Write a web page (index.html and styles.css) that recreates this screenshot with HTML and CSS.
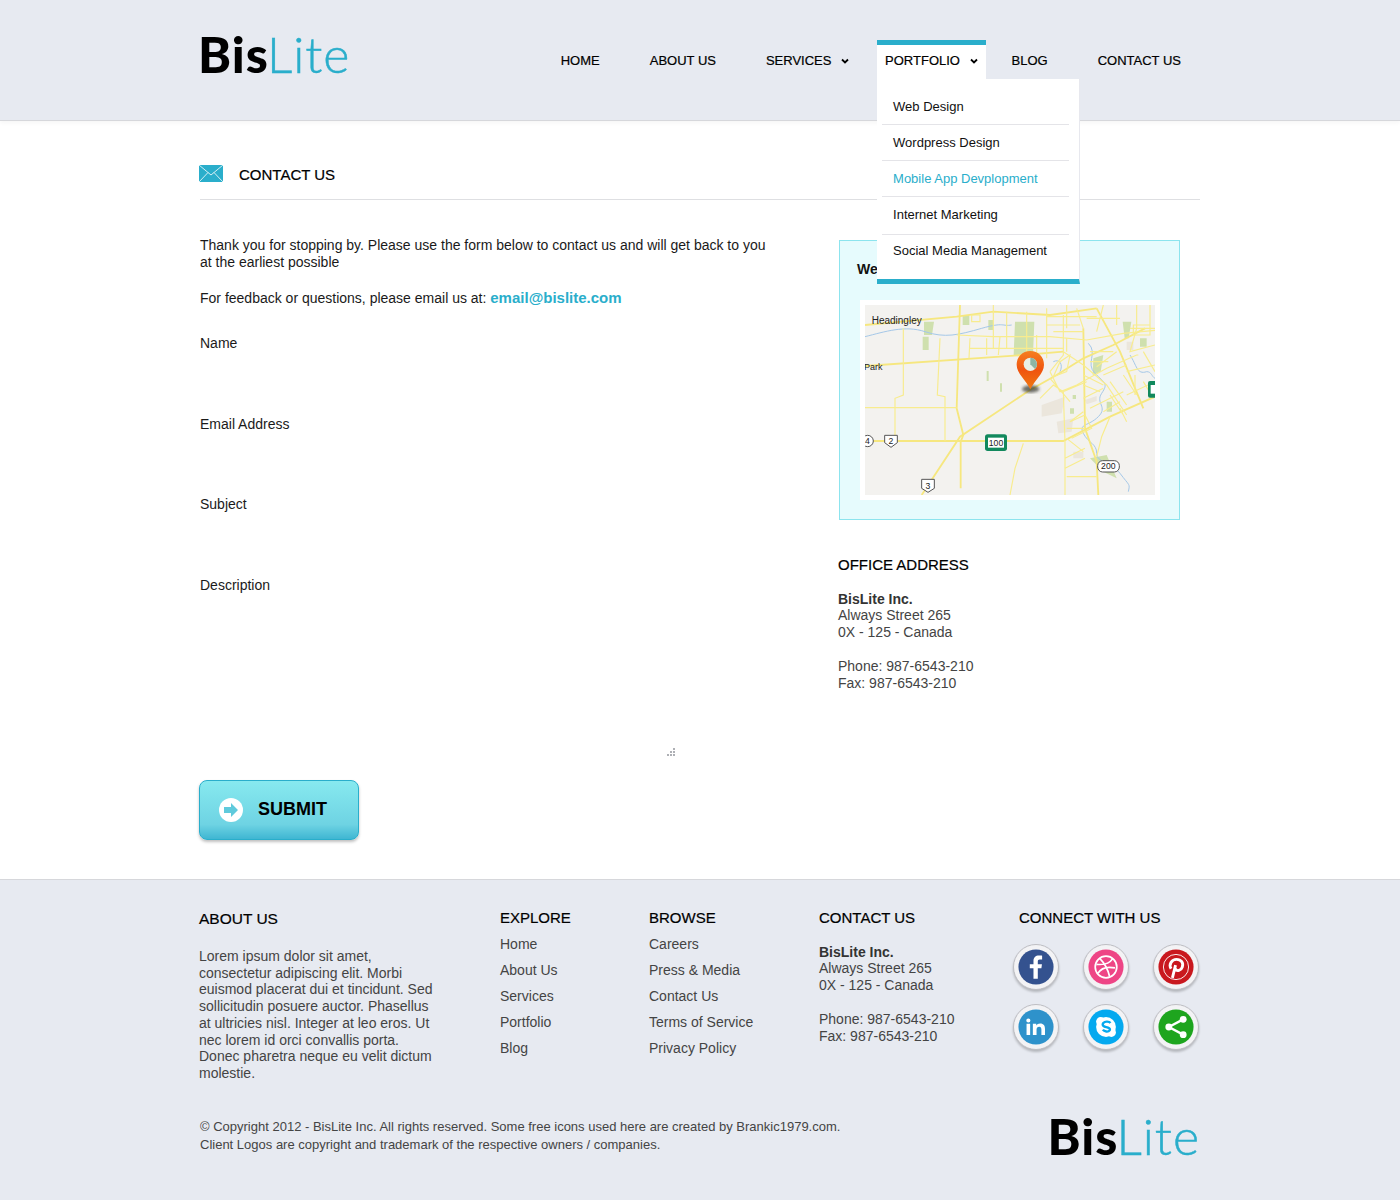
FILE: index.html
```html
<!DOCTYPE html>
<html>
<head>
	<meta charset="UTF-8">
	<title>BisLite - Contact Us</title>
	<link rel="stylesheet" href="styles.css">
</head>
<body>

<header class="top">
	<div class="wrap top-in">
		<a class="logo" href="#"><b>Bis</b><span>Lite</span></a>
		<ul class="nav">
			<li><a href="#">HOME</a></li>
			<li><a href="#">ABOUT US</a></li>
			<li class="has-sub"><a href="#">SERVICES <svg class="caret" viewBox="0 0 8 6"><path d="M1 1.5l3 3 3-3"/></svg></a></li>
			<li class="has-sub current">
				<a href="#">PORTFOLIO <svg class="caret" viewBox="0 0 8 6"><path d="M1 1.5l3 3 3-3"/></svg></a>
				<ul class="sub">
					<li><a href="#">Web Design</a></li>
					<li><a href="#">Wordpress Design</a></li>
					<li class="on"><a href="#">Mobile App Devplopment</a></li>
					<li class="tall"><a href="#">Internet Marketing</a></li>
					<li><a href="#">Social Media Management</a></li>
				</ul>
			</li>
			<li><a href="#">BLOG</a></li>
			<li><a href="#">CONTACT US</a></li>
		</ul>
	</div>
</header>

<main class="wrap main">
	<h1 class="page-title">
		<svg class="env" viewBox="0 0 24 17"><rect width="24" height="17" fill="#2aaecb"/><path d="M0 0l12 10L24 0M0 17l9-9.5M24 17l-9-9.5" fill="none" stroke="#fff" stroke-width=".8"/></svg>
		CONTACT US
	</h1>

	<div class="cols">
		<div class="left">
			<p class="intro">Thank you for stopping by. Please use the form below to contact us and will get back to you at the earliest possible</p>
			<p class="intro mail-line">For feedback or questions, please email us at: <a href="#">email@bislite.com</a></p>
			<form class="form">
				<label>Name</label>
				<input type="text">
				<label>Email Address</label>
				<input type="text">
				<label>Subject</label>
				<input type="text">
				<label>Description</label>
				<div class="ta-wrap">
					<textarea></textarea>
					<svg class="grip" viewBox="0 0 9 8"><path d="M7 0h2v2H7zM4 3h2v2H4zM7 3h2v2H7zM1 6h2v2H1zM4 6h2v2H4zM7 6h2v2H7z"/></svg>
				</div>
				<button type="button" class="submit">
					<svg viewBox="0 0 24 24"><circle cx="12" cy="12" r="12" fill="#fff"/><path d="M5 9h7V5l7 7-7 7v-4H5z" fill="#5fcadc"/></svg>
					SUBMIT
				</button>
			</form>
		</div>

		<aside class="right">
			<div class="map-box">
				<h3>We are located here</h3>
				<div class="map-frame">
					<svg class="map" viewBox="45 30 870 570">
						<defs>
							<linearGradient id="pin" x1="0" y1="0" x2="0" y2="1"><stop offset="0" stop-color="#f57f20"/><stop offset=".5" stop-color="#f0540f"/><stop offset="1" stop-color="#ee7a12"/></linearGradient>
							<filter id="soft"><feGaussianBlur stdDeviation="5"/></filter>
						</defs>
						<rect x="45" y="30" width="870" height="570" fill="#f3f2ef"/>
						<g class="park">
							<path d="M495 80h58l-4 100h-58zM222 80h30l-6 40h-24zM338 60h20v30h-20zM218 125h18v40h-18zM818 80h26l-8 50h-12zM730 190l30-10-8 50-24 10zM720 490l50-10 30 70-40-20zM410 228h6v30h-6zM450 265h6v25h-6zM660 340h12v16h-12zM668 300h10v12h-10zM415 75h15v30h-15zM870 130h20v25h-20zM770 320h16v30h-16z"/>
						</g>
						<path class="urban" d="M575 330l70-25-10 50-60 10zM620 380l50-10-5 40-40 5zM670 470h30v20h-30zM830 140h20v25h-20zM705 315l35-12v15l-30 10z"/>
						<g class="water">
							<path d="M45 125c60-15 120-35 180-15s100 10 170-10 60-5 90-10"/>
							<path d="M715 145c30 30-10 60 20 90s40 30 20 60 20 40-10 70-60 20-45 50 40 30 40 60 40 20 70 60 30 30 25 55"/>
							<path d="M840 180c20 30 20 60 50 50 15 0 15 15 25 20"/>
							<path d="M610 200c20-10 30 10 20 30"/>
						</g>
						<g class="roads">
							<path class="major" d="M45 438h595l140-73 135-60"/>
							<path class="major" d="M215 600l115-175 210-140 80-45 80-50 90-40 95-50"/>
							<path class="major" d="M45 213l475-33 120-10"/>
							<path class="major" d="M45 90l275-25 110-15 170 10 140-20"/>
							<path class="major" d="M330 30l-10 310 20 80-8 20v140"/>
							<path d="M160 100v200l-25 10v128M270 130l-8 170 23 5v133M45 338h275M520 445l-25 75-15 80"/>
							<path class="major" d="M700 100l5 300 35 100 5 100M740 40l70 130 70 170"/>
							<path d="M320 120l110 5h170l110 10 110-20 105-10M430 30v130M470 50v110M530 50v130M590 40v150M640 60v120l-40 50M680 40l20 60M360 130l-3 60M410 130v50M450 125l-5 55"/>
							<path d="M640 170l60 40 70 60 60 90M600 230l30 60 50-20 90-50 90-40 5 0M570 310l40-40 30 20 70-30M640 290l5 150v160M660 380l45-20 20 40-60 30M645 490l60-30M800 170l-60 45M840 100h75M860 100l-20 70 75-20M880 170l35 60M780 260l50 70M820 240l40 60M760 350l50-30M600 250l60 70M660 180l-10 50-40 15 20-45z"/>
							<path d="M365 60h25v20h-25zM850 90h50v30h-50zM590 90h100M590 65h150M650 30v70M610 110h90M710 70h100M760 30l-20 80M800 30v60M860 30v70M900 30v90M720 170h70M720 200h55M650 130v40M560 120v60M490 160h150M360 160h130M760 240l70-30M700 240l60 30M700 270l50 20M700 310l60-30M720 340l100-50M780 300l40 60M830 300l85-40M830 230l85-20M855 300v-60M880 260l30 50M650 400h55M650 430l50 40M780 365l-25 60-15 60M645 520l60-30M740 545h-90M810 340l20 40M700 350l-40 30"/>
						</g>
						<text class="map-label" x="65" y="88">Headingley</text>
						<text class="map-label small" x="42" y="226">Park</text>
						<g class="shield">
							<path d="M104 421h38v22l-19 14-19-14z"/><path d="M215 553h38v27l-19 12-19-12z"/><circle cx="53" cy="438" r="17"/><rect x="743" y="497" width="65" height="34" rx="15"/>
						</g>
						<text class="shield-num" x="123" y="447">2</text>
						<text class="shield-num" x="234" y="581">3</text>
						<text class="shield-num" x="52" y="447">4</text>
						<text class="shield-num" x="775" y="523">200</text>
						<rect class="hwy" x="405" y="418" width="66" height="50" rx="8"/>
						<rect class="hwy" x="894" y="258" width="30" height="50" rx="6"/>
						<rect x="414" y="428" width="48" height="30" fill="#fff"/>
						<rect x="902" y="270" width="14" height="26" fill="#fff"/>
						<text class="shield-num" x="438" y="453">100</text>
						<ellipse cx="542" cy="282" rx="26" ry="11" class="pin-shadow" filter="url(#soft)"/>
						<path d="M541 168c-24 0-41 18-41 41 0 26 28 46 41 74 13-28 41-48 41-74 0-23-17-41-41-41z" fill="url(#pin)"/>
						<circle cx="541" cy="208" r="20" fill="#e9efe5"/>
						<path d="M541 188a20 20 0 0 1 14 34l-14-14z" fill="#8db5a3"/>
					</svg>
				</div>
			</div>

			<h4 class="office-title">OFFICE ADDRESS</h4>
			<address class="addr office-addr">
				<b>BisLite Inc.</b>
				Always Street 265<br>
				0X - 125 - Canada
				<span class="phones">Phone: 987-6543-210<br>Fax: 987-6543-210</span>
			</address>
		</aside>
	</div>
</main>

<footer class="foot">
	<div class="wrap">
		<div class="foot-cols">
			<div class="fc fc-about">
				<h5 class="about-h">ABOUT US</h5>
				<p>Lorem ipsum dolor sit amet, consectetur adipiscing elit. Morbi euismod placerat dui et tincidunt. Sed sollicitudin posuere auctor. Phasellus at ultricies nisl. Integer at leo eros. Ut nec lorem id orci convallis porta. Donec pharetra neque eu velit dictum molestie.</p>
			</div>
			<div class="fc fc-explore">
				<h5>EXPLORE</h5>
				<ul>
					<li><a href="#">Home</a></li>
					<li><a href="#">About Us</a></li>
					<li><a href="#">Services</a></li>
					<li><a href="#">Portfolio</a></li>
					<li><a href="#">Blog</a></li>
				</ul>
			</div>
			<div class="fc fc-browse">
				<h5>BROWSE</h5>
				<ul>
					<li><a href="#">Careers</a></li>
					<li><a href="#">Press &amp; Media</a></li>
					<li><a href="#">Contact Us</a></li>
					<li><a href="#">Terms of Service</a></li>
					<li><a href="#">Privacy Policy</a></li>
				</ul>
			</div>
			<div class="fc fc-contact">
				<h5>CONTACT US</h5>
				<address class="addr">
					<b>BisLite Inc.</b>
					Always Street 265<br>
					0X - 125 - Canada
					<span class="phones">Phone: 987-6543-210<br>Fax: 987-6543-210</span>
				</address>
			</div>
			<div class="fc fc-connect">
				<h5>CONNECT WITH US</h5>
				<div class="social">
					<svg viewBox="0 0 48 48"><circle class="ring" cx="24" cy="24" r="22.5"/><g class="badge"><circle cx="24" cy="24" r="19.5" fill="#34528f"/><path d="M26 37V25.500h4l.6-4.600H26v-3c0-1.400.4-2.300 2.300-2.300h2.500v-4.100c-.5-.1-1.900-.2-3.600-.2-3.600 0-6 2.200-6 6.100v3.500h-4.100v4.600h4.100V37z" fill="#fff"/></g></svg>
					<svg viewBox="0 0 48 48"><circle class="ring" cx="24" cy="24" r="22.5"/><g class="badge"><circle cx="24" cy="24" r="19.5" fill="#ee4585"/><g fill="none" stroke="#fff" stroke-width="1.900"><circle cx="24" cy="24" r="12"/><path d="M17 14.500c4 4 9 12 11 20M13.500 21c7 .8 14-.3 18-6.300M15 31c3-5 9-8 19-6"/></g></g></svg>
					<svg viewBox="0 0 48 48"><circle class="ring" cx="24" cy="24" r="22.5"/><g class="badge"><circle cx="24" cy="24" r="19.500" fill="#c9181e"/><circle cx="24" cy="24" r="14" fill="none" stroke="#fff" stroke-width="1"/><path d="M20 36l3.500-14M18.500 26c-3-5 1-10.500 6-10.500 5.500 0 8 4 6.500 8.500-1.300 4-6 5.500-8 2" fill="none" stroke="#fff" stroke-width="3.200"/></g></svg>
					<svg viewBox="0 0 48 48"><circle class="ring" cx="24" cy="24" r="22.5"/><g class="badge"><circle cx="24" cy="24" r="19.500" fill="#2e92cb"/><path d="M13.500 20.500h4V33h-4zM15.500 14.500a2.300 2.300 0 1 1 0 4.600 2.300 2.300 0 0 1 0-4.600zM20.500 20.500h3.800v1.800c.8-1.300 2.300-2.200 4.300-2.200 4 0 5.400 2.500 5.400 6.200V33h-4v-5.900c0-1.900-.4-3.500-2.400-3.500s-3 1.400-3 3.500V33h-4.100z" fill="#fff"/></g></svg>
					<svg viewBox="0 0 48 48"><circle class="ring" cx="24" cy="24" r="22.5"/><g class="badge"><circle cx="24" cy="24" r="19.500" fill="#05a9ef"/><circle cx="24" cy="24" r="11" fill="#fff"/><circle cx="18" cy="18" r="5" fill="#fff"/><circle cx="30" cy="30" r="5" fill="#fff"/><path d="M29 19.500c-1.300-1.600-6-2.300-8 0-2 2.800 1 4.200 3.300 4.700s5 1.300 3.700 3.600c-1.300 2-6 1.500-7.500-.8" fill="none" stroke="#05a9ef" stroke-width="2.600"/></g></svg>
					<svg viewBox="0 0 48 48"><circle class="ring" cx="24" cy="24" r="22.5"/><g class="badge"><circle cx="24" cy="24" r="19.500" fill="#1ea51e"/><path d="M32 15.500L16 24l16 8.500" fill="none" stroke="#fff" stroke-width="2.600"/><circle cx="32" cy="15.500" r="3.800" fill="#fff"/><circle cx="16" cy="24" r="3.800" fill="#fff"/><circle cx="32" cy="32.500" r="3.800" fill="#fff"/></g></svg>
				</div>
			</div>
		</div>
		<div class="foot-bottom">
			<p class="copy">&copy; Copyright 2012 - BisLite Inc. All rights reserved. Some free icons used here are created by Brankic1979.com.<br>Client Logos are copyright and trademark of the respective owners / companies.</p>
			<a class="logo" href="#"><b>Bis</b><span>Lite</span></a>
		</div>
	</div>
</footer>

</body>
</html>
```

FILE: styles.css
```css
html, body { margin: 0; padding: 0; }
body { font-family: "Liberation Sans", Arial, sans-serif; font-size: 14px; line-height: 17px; color: #1a1a1a; background: #fff; }
a { color: inherit; text-decoration: none; }
ul { list-style: none; margin: 0; padding: 0; }
h1, h3, h4, h5, p { margin: 0; font-weight: normal; }
address { font-style: normal; }

.wrap { width: 1000px; margin: 0 auto; }

/* header */
.top { height: 120px; background: #e7eaf1; border-bottom: 1px solid #d6d7db; box-shadow: 0 2px 4px rgba(0,0,0,.04); }
.top-in { display: flex; justify-content: space-between; align-items: flex-start; }
.logo { display: block; margin-left: -2px; font-family: Lato, sans-serif; font-size: 50px; line-height: 60px; letter-spacing: 1px; color: #000; white-space: nowrap; }
.logo b { font-weight: 900; }
.logo span { font-weight: 300; color: #2aaecb; margin-left: -2px; -webkit-text-stroke: .5px #2aaecb; }
.top .logo { margin-top: 24px; }

.nav { display: flex; gap: 34px; margin: 40px 11px 0 0; font-size: 13px; -webkit-text-stroke: .2px #000; color: #000; }
.nav > li { position: relative; border-top: 5px solid transparent; }
.nav > li > a { display: block; padding: 0 8px; height: 34px; line-height: 31px; }
.nav .has-sub { margin-right: -14px; }
.nav .current { background: #fff; border-top-color: #2aaecb; margin-right: -16px; }
.caret { width: 8px; height: 6px; margin-left: 6px; vertical-align: 1px; }
.caret path { fill: none; stroke: #000; stroke-width: 1.800; }

.sub { position: absolute; top: 34px; left: 0; width: 203px; height: 205px; box-sizing: border-box; padding: 10px 10px 0 5px; background: #fff; border: 1px solid #e7e8ee; border-width: 0 1px 5px 0; border-bottom-color: #2aaecb; z-index: 5; font-size: 13px; -webkit-text-stroke: 0; }
.sub li { height: 35px; border-bottom: 1px solid #e4e4e8; padding-left: 11px; line-height: 36px; color: #111; }
.sub li.tall { height: 37px; }
.sub li:last-child { border-bottom: 0; line-height: 32px; }
.sub .on { color: #2aaecb; }

/* main */
.main { height: 758px; }
.page-title { display: flex; align-items: center; height: 79px; box-sizing: border-box; padding: 39px 0 10px; border-bottom: 1px solid #dedfe2; font-size: 15px; color: #000; -webkit-text-stroke: .2px #000; }
.env { width: 24px; height: 17px; margin: -2px 16px 0 -1px; }
.cols { display: flex; justify-content: space-between; }
.left { width: 580px; padding-top: 37px; }
.intro { margin-bottom: 18px; }
.mail-line a { color: #2aaecb; font-weight: bold; font-size: 15px; }
.form { display: flex; flex-direction: column; align-items: flex-start; padding-top: 10px; }
.form label { height: 17px; margin-bottom: 8px; }
.form input { width: 400px; height: 55.670px; border: 0; padding: 0; outline: 0; background: transparent; }
.ta-wrap { position: relative; margin-bottom: 24px; }
.form textarea { display: block; width: 475px; height: 154px; border: 0; padding: 0; outline: 0; resize: none; background: transparent; }
.grip { position: absolute; right: 0; bottom: 0; width: 9px; height: 8px; fill: #aeb0b5; }
.submit { display: flex; align-items: center; width: 160px; height: 60px; margin-left: -1px; padding: 0 0 0 19px; border: 1px solid #2aaecb; border-radius: 8px; background: linear-gradient(#87e9ef, #6ed3e3 75%, #3fb6d2); box-shadow: 0 2px 3px rgba(0,0,0,.25); font: bold 18px "Liberation Sans", Arial, sans-serif; color: #000; box-sizing: border-box; }
.submit svg { width: 24px; height: 24px; margin-right: 15px; }

.right { width: 362px; padding-top: 40px; }
.map-box { width: 341px; height: 280px; margin-left: 1px; box-sizing: border-box; border: 1px solid #8ce4ee; background: #e6fbfd; padding: 20px 19px 0 20px; }
.map-box h3 { font-weight: bold; height: 39px; margin-left: -3px; font-size: 14px; color: #111; }
.map-frame { width: 290px; height: 190px; padding: 5px; background: #fff; }
.map { display: block; width: 290px; height: 190px; }
.park { fill: #cfe0ae; }
.urban { fill: #ebe6dc; }
.water path { fill: none; stroke: #a5c8e8; stroke-width: 3; }
.roads path { fill: none; stroke: #f8ec8e; stroke-width: 3.500; }
.roads path.major { stroke: #f6e77f; stroke-width: 5.500; }
.map-label { font-size: 30px; fill: #222; }
.map-label.small { font-size: 27px; }
.shield path, .shield circle, .shield rect { fill: #fff; stroke: #555; stroke-width: 3; }
.shield-num { font-size: 26px; text-anchor: middle; fill: #222; }
.hwy { fill: #12895d; }
.pin-shadow { fill: rgba(50,50,40,.7); }

.office-title { margin-top: 36px; font-size: 15px; line-height: 18px; color: #000; -webkit-text-stroke: .2px #000; }
.addr { color: #444; font-size: 14px; line-height: 17px; }
.addr b { display: block; height: 16px; color: #333; }
.office-addr { margin-top: 17px; }
.phones { display: block; margin-top: 17px; }

/* footer */
.foot { height: 321px; box-sizing: border-box; background: #e7eaf1; border-top: 1px solid #d6d7db; }
.foot-cols { display: flex; padding-top: 29px; height: 220px; box-sizing: border-box; }
.fc h5 { font-size: 15px; line-height: 18px; color: #000; -webkit-text-stroke: .2px #000; }
.fc-about { width: 301px; margin-left: -1px; }
.fc h5.about-h { margin-top: 1px; font-size: 15.500px; }
.fc-about p { margin-top: 20px; width: 240px; color: #444; line-height: 16.700px; }
.fc-explore { width: 149px; }
.fc-browse { width: 170px; }
.fc-contact { width: 200px; }
.fc-connect { width: 181px; }
.fc ul { margin-top: 4px; color: #444; }
.fc li { height: 26px; line-height: 26px; }
.fc .addr { margin-top: 17px; }
.social { display: grid; grid-template-columns: repeat(3, 48px); justify-content: space-between; row-gap: 12px; margin: 16px 0 0 -7px; }
.social svg { display: block; width: 48px; height: 48px; filter: drop-shadow(0 2px 1px rgba(0,0,0,.22)); }
.ring { fill: #f3f3f5; stroke: #bdbdc2; stroke-width: 1; }
.badge { transform: translate(2.400px, 2.400px) scale(.9); }
.foot-bottom { display: flex; justify-content: space-between; align-items: flex-start; }
.copy { margin-top: 18px; font-size: 13px; line-height: 18px; color: #444; }
.foot-bottom .logo { margin-top: 6px; }
```
